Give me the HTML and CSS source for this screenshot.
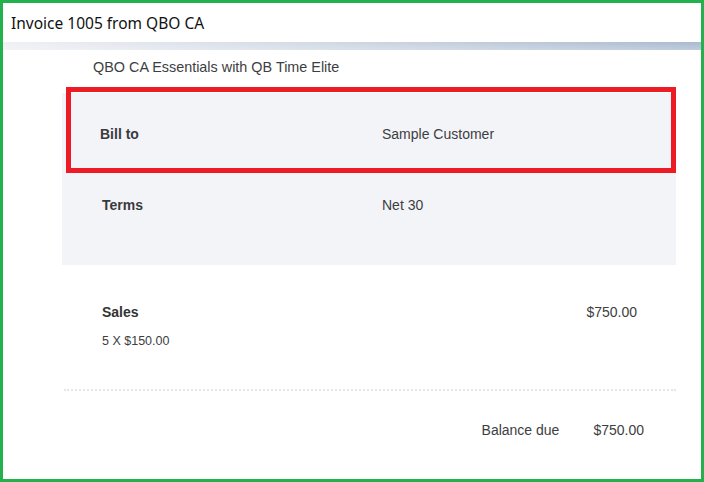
FILE: index.html
```html
<!DOCTYPE html>
<html lang="en">
<head>
    <meta charset="UTF-8">
    <meta name="viewport" content="width=device-width, initial-scale=1.0">
    <title>Invoice 1005 from QBO CA</title>
    <link rel="stylesheet" href="styles.css">
</head>
<body>
    <div class="frame">
        <div class="title-bar">Invoice 1005 from QBO CA</div>
        <div class="title-shadow"></div>

        <div class="content">
            <div class="plan">QBO CA Essentials with QB Time Elite</div>

            <div class="details">
                <div class="highlight"></div>
                <div class="detail-row">
                    <div class="label">Bill to</div>
                    <div class="value">Sample Customer</div>
                </div>
                <div class="detail-row">
                    <div class="label terms">Terms</div>
                    <div class="value">Net 30</div>
                </div>
            </div>

            <div class="line-item">
                <div class="item-head">
                    <span class="item-name">Sales</span>
                    <span class="item-amount">$750.00</span>
                </div>
                <div class="item-qty">5 X $150.00</div>
            </div>

            <div class="divider"></div>

            <div class="balance">
                <span>Balance due</span>
                <span>$750.00</span>
            </div>
        </div>
    </div>
</body>
</html>
```

FILE: styles.css
```css
html, body {
    margin: 0;
    padding: 0;
    background-color: #fff;
}

.frame {
    width: 704px;
    height: 482px;
    box-sizing: border-box;
    border: 3px solid #22b14c;
    overflow: hidden;
    font-family: "Liberation Sans", Arial, sans-serif;
    color: #3d3e41;
}

.title-bar {
    height: 39px;
    padding-left: 8px;
    display: flex;
    align-items: center;
    font-family: "Noto Sans", "Open Sans", sans-serif;
    font-size: 15.5px;
    color: #111;
    background-color: #fff;
}

.title-shadow {
    height: 8px;
    background: linear-gradient(to bottom, rgba(255,255,255,0) 0%, rgba(255,255,255,0.25) 100%),
                linear-gradient(to right, #eef0f4 0%, #d5dce6 40%, #a9bbd0 100%);
}

.content {
    margin: 0 25px 0 59px;
    font-size: 14px;
}

.plan {
    padding-left: 31px;
    line-height: 20px;
    margin-top: 7px;
    font-size: 14.4px;
}

.details {
    position: relative;
    margin-top: 16px;
    padding: 30px 0 49px 38px;
    background-color: #f3f4f8;
    display: flex;
    flex-direction: column;
    gap: 49px;
}

.highlight {
    position: absolute;
    left: 4px;
    top: -6px;
    width: 610px;
    height: 86px;
    box-sizing: border-box;
    border: 5px solid #ed1c24;
}

.detail-row {
    display: grid;
    grid-template-columns: 282px 1fr;
    line-height: 22px;
}

.label {
    font-weight: bold;
    font-size: 14px;
    color: #393a3d;
}

.label.terms {
    padding-left: 2px;
}

.line-item {
    margin-top: 36px;
    padding: 0 39px 0 40px;
}

.item-head {
    display: flex;
    justify-content: space-between;
    line-height: 22px;
}

.item-name {
    font-weight: bold;
    color: #333;
}

.item-qty {
    margin-top: 7px;
    line-height: 22px;
    font-size: 12.5px;
}

.divider {
    margin: 37px 0 0 2px;
    border-top: 2px dotted #e6e6e6;
}

.balance {
    margin-top: 28px;
    padding-right: 32px;
    display: flex;
    justify-content: flex-end;
    gap: 34px;
    line-height: 22px;
}
```
